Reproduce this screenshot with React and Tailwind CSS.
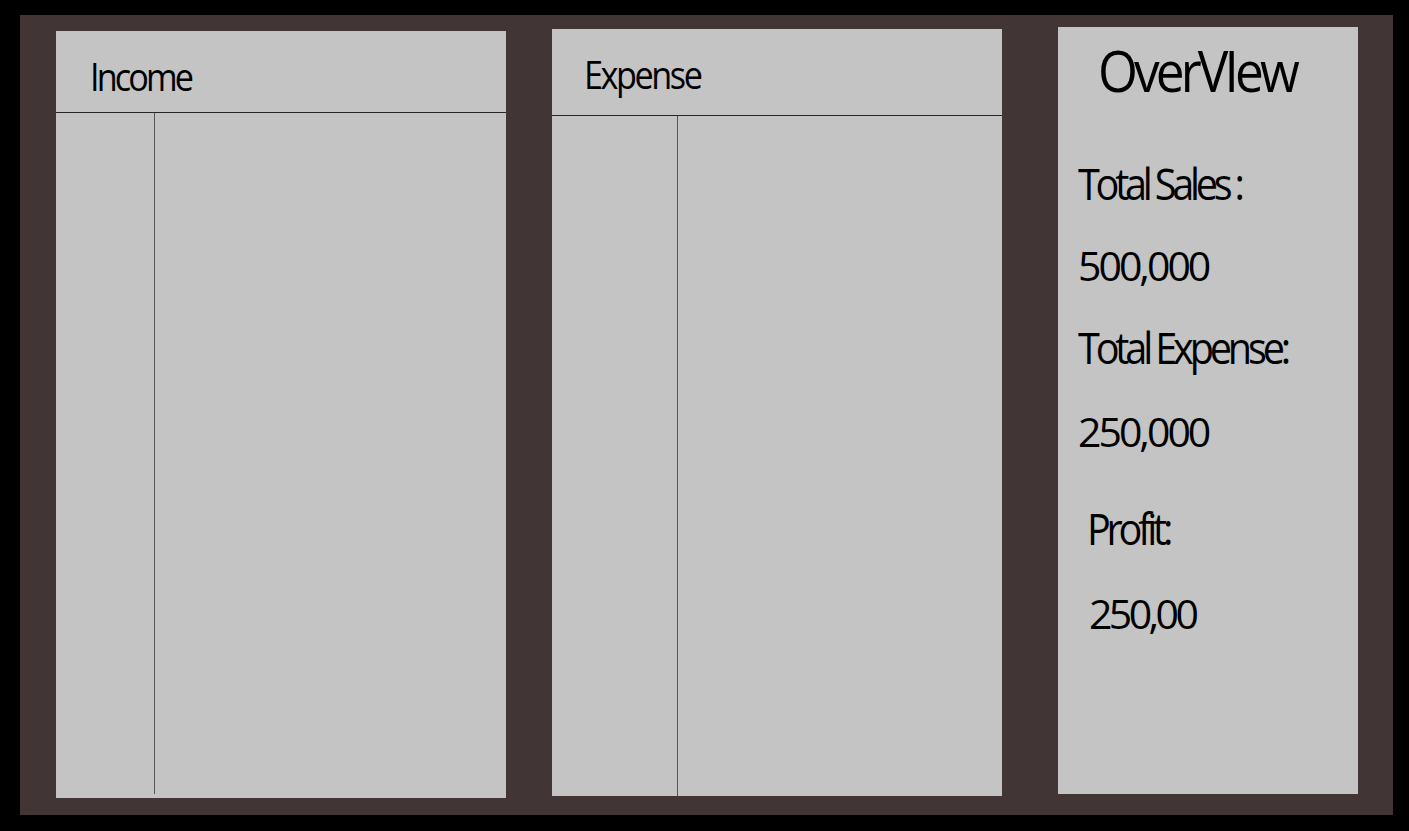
const font = { fontFamily: "'Open Sans', 'DejaVu Sans', sans-serif" };

// narrow label: glyphs squeezed a little, tight tracking
function Squeezed({ children, className }) {
  return <span className={`inline-block scale-x-[0.9] origin-left whitespace-nowrap ${className}`}>{children}</span>;
}

function LedgerPanel({ title, className, headerH, titlePad, splitW, splitGap, tracking }) {
  return (
    <div className={`flex flex-col bg-[#c4c4c4] w-[450px] h-[767px] ${className}`}>
      {/* HEADER */}
      <div className={`${headerH} ${titlePad} border-b border-[#262626] shrink-0`}>
        <p className="text-[38px] leading-none text-black">
          <Squeezed className={tracking}>{title}</Squeezed>
        </p>
      </div>
      {/* BODY */}
      <div className={`flex-1 flex ${splitGap}`}>
        <div className={`${splitW} border-r border-[#555555]`} />
        <div className="flex-1" />
      </div>
    </div>
  );
}

export default function App() {
  return (
    <div className="w-[1409px] h-[831px] bg-black pt-[15px] pl-[20px]" style={font}>
      <div className="w-[1373px] h-[800px] bg-[#413535] flex items-start pl-[36px]">

        <LedgerPanel
          title="Income"
          className="mt-[16px]"
          headerH="h-[82px]"
          titlePad="pt-[26px] pl-[34px]"
          splitW="w-[99px]"
          splitGap="pb-[4px]"
          tracking="tracking-[-3.2px]"
        />

        <LedgerPanel
          title="Expense"
          className="mt-[14px] ml-[46px]"
          headerH="h-[87px]"
          titlePad="pt-[26px] pl-[32px]"
          splitW="w-[126px]"
          splitGap=""
          tracking="tracking-[-2.7px]"
        />

        {/* OVERVIEW */}
        <div className="mt-[12px] ml-[56px] w-[300px] h-[767px] bg-[#c4c4c4] flex flex-col text-black">
          <p className="mt-[15px] pl-[40px] text-[57px] leading-none">
            <Squeezed className="tracking-[-4.3px]">OverVIew</Squeezed>
          </p>
          <p className="mt-[62px] pl-[20px] text-[44px] leading-none">
            <Squeezed className="tracking-[-4.7px]">Total Sales :</Squeezed>
          </p>
          <p className="mt-[40px] pl-[20px] text-[41px] leading-none tracking-[-3px]">500,000</p>
          <p className="mt-[39px] pl-[20px] text-[44px] leading-none">
            <Squeezed className="tracking-[-4.6px]">Total Expense:</Squeezed>
          </p>
          <p className="mt-[42px] pl-[20px] text-[41px] leading-none tracking-[-3px]">250,000</p>
          <p className="mt-[54px] pl-[29px] text-[44px] leading-none">
            <Squeezed className="tracking-[-4.7px]">Profit:</Squeezed>
          </p>
          <p className="mt-[43px] pl-[31px] text-[41px] leading-none tracking-[-3.6px]">250,00</p>
        </div>

      </div>
    </div>
  );
}
